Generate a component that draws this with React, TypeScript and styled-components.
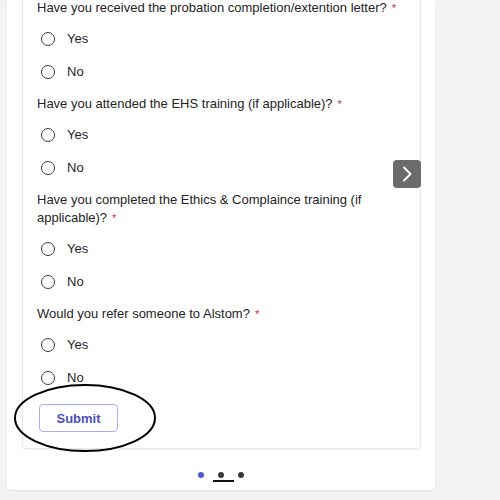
import styled, { createGlobalStyle } from "styled-components";

const GlobalStyle = createGlobalStyle`
    html, body {
        margin: 0;
        padding: 0;
        background: #f3f3f3;
        font-family: "Liberation Sans", Arial, sans-serif;
        color: #242424;
    }
`

const Page = styled.div`
    position: relative;
    width: 500px;
    height: 500px;
    overflow: hidden;
`

const Panel = styled.div`
    margin-left: 7px;
    width: 428px;
    height: 490px;
    background: #fff;
    border-radius: 0 0 4px 4px;
    box-shadow: 0 1px 2px rgba(0, 0, 0, 0.06);
    display: flex;
    flex-direction: column;
`

const Card = styled.div`
    margin-left: 15px;
    width: 383px;
    padding: 0 0 16px 14px;
    border: 1px solid #e8e8e8;
    border-top: none;
    border-radius: 0 0 4px 4px;
    box-shadow: 0 1px 2px rgba(0, 0, 0, 0.05);
    margin-top: -1px;
`

const Question = styled.div`
    margin-bottom: 7px;
`

// the red asterisk marks a required question
const Label = styled.div<{ $required?: boolean }>`
    font-size: 13px;
    line-height: 18px;
    margin-bottom: 5px;
    padding-right: 14px;
    &::after {
        content: ${p => p.$required ? '"*"' : '""'};
        color: #c4314b;
        font-size: 11px;
        margin-left: 5px;
    }
`

const Option = styled.label`
    display: flex;
    align-items: center;
    height: 33px;
    font-size: 13px;
    padding-left: 4px;
`

const Radio = styled.span`
    width: 12px;
    height: 12px;
    border: 1.5px solid #3b3b3b;
    border-radius: 50%;
    margin-right: 12px;
`

const Submit = styled.button`
    margin-top: 3px;
    margin-left: 2px;
    width: 79px;
    height: 28px;
    background: #fff;
    border: 1px solid #a9acf2;
    border-radius: 4px;
    color: #4a4fc2;
    font-family: "Liberation Sans", Arial, sans-serif;
    font-size: 13px;
    font-weight: 600;
`

const Dots = styled.div`
    display: flex;
    justify-content: center;
    gap: 14px;
    margin-top: 23px;
`

const Dot = styled.span<{ $active?: boolean; $current?: boolean }>`
    position: relative;
    width: 6px;
    height: 6px;
    border-radius: 50%;
    background: ${p => p.$active ? "#5558c8" : "#3a3a3a"};
    &::after {
        content: "";
        display: ${p => p.$current ? "block" : "none"};
        position: absolute;
        left: -5px;
        top: 8px;
        width: 21px;
        height: 2px;
        background: #111;
    }
`

const NextButton = styled.div`
    position: absolute;
    left: 393px;
    top: 160px;
    width: 28px;
    height: 28px;
    border-radius: 4px;
    background: #6b6b6b;
    display: flex;
    align-items: center;
    justify-content: center;
`

const Circle = styled.svg`
    position: absolute;
    left: 13px;
    top: 383px;
`

const questions = [
    "Have you received the probation completion/extention letter?",
    "Have you attended the EHS training (if applicable)?",
    "Have you completed the Ethics & Complaince training (if applicable)?",
    "Would you refer someone to Alstom?",
]

export default function App() {
    return (
        <Page>
            <GlobalStyle />
            <Panel>
                <Card>
                    {questions.map(q => (
                        <Question key={q}>
                            <Label $required>{q}</Label>
                            <Option><Radio />Yes</Option>
                            <Option><Radio />No</Option>
                        </Question>
                    ))}
                    <Submit>Submit</Submit>
                </Card>
                <Dots>
                    <Dot $active />
                    <Dot $current />
                    <Dot />
                </Dots>
            </Panel>
            <NextButton>
                <svg width="12" height="16" viewBox="0 0 12 16">
                    <path d="M3 1.5 L9.5 8 L3 14.5" stroke="#fff" strokeWidth="1.8" fill="none" strokeLinecap="round" strokeLinejoin="round" />
                </svg>
            </NextButton>
            <Circle width="144" height="70" viewBox="0 0 144 70">
                <ellipse cx="72" cy="35" rx="70" ry="33" stroke="#000" strokeWidth="2" fill="none" />
            </Circle>
        </Page>
    )
}
